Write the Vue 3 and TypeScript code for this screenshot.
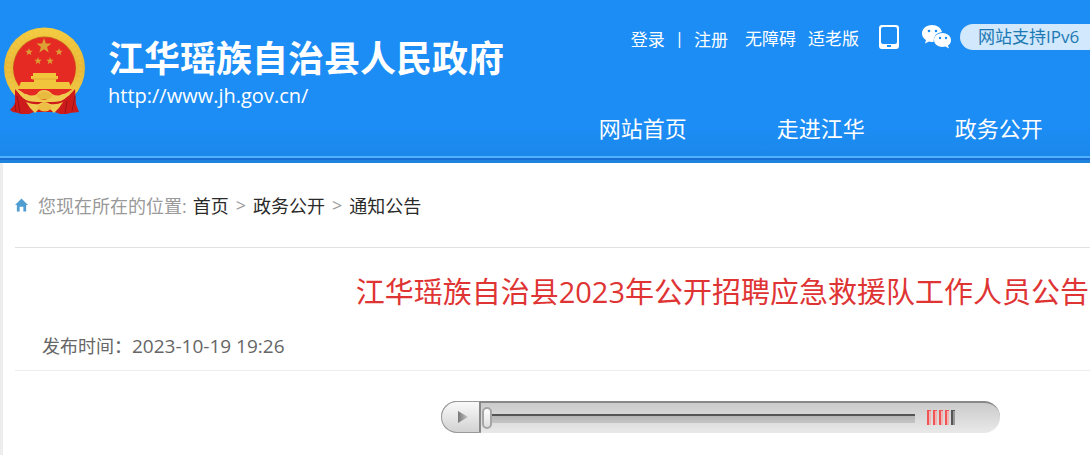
<script setup lang="ts">
const navItems: string[] = ['网站首页', '走进江华', '政务公开']
const crumbs: string[] = ['首页', '政务公开', '通知公告']
const volumeBars: number[] = [0, 1, 2, 3, 4]
const star = (cx: number, cy: number, r: number): string =>
  Array.from({ length: 10 }, (_, i) => {
    const radius = i % 2 ? r * 0.4 : r
    const a = (i * Math.PI) / 5 - Math.PI / 2
    return `${(cx + radius * Math.cos(a)).toFixed(2)},${(cy + radius * Math.sin(a)).toFixed(2)}`
  }).join(' ')
const stars: string[] = [
  star(40, 19, 8),
  star(25, 25, 4),
  star(55, 25, 4),
  star(34, 34, 4),
  star(46, 34, 4),
]
</script>

<template>
  <div class="page">
    <header class="header">
      <div class="brand">
        <svg class="emblem" viewBox="0 0 82 88" aria-hidden="true">
          <defs>
            <linearGradient id="gold" x1="0" y1="0" x2="0" y2="1">
              <stop offset="0" stop-color="#f3cb40" />
              <stop offset="0.5" stop-color="#e8b838" />
              <stop offset="1" stop-color="#f3cf48" />
            </linearGradient>
          </defs>
          <circle cx="40.500" cy="41" r="40.500" fill="url(#gold)" />
          <circle cx="40.500" cy="41" r="36" fill="none" stroke="#f9dc66" stroke-width="4" stroke-dasharray="2 3" opacity="0.2" />
          <circle cx="40.500" cy="41" r="31.500" fill="#c8641f" />
          <circle cx="40.500" cy="41.500" r="31" fill="#e42a22" />
          <polygon v-for="(s, i) in stars" :key="i" :points="s" fill="#dca035" />
          <path d="M29 46h23v3h2v3h-2v3H30v-3h-3v-3h2z" fill="#f2c63c" />
          <path d="M28 52h25" stroke="#e5a834" />
          <path d="M17 55h48l3 7H14z" fill="#f2c63c" />
          <path d="M14 62h54q-1 3-3 5H17q-2-2-3-5z" fill="#e42a22" />
          <path d="M11 62q10 13 22 13h15q13 0 23-13l1 15 3 8-9 1-3 1H56l-5-2H30l-5 2H17l-3-1-5-1-3-2 5-6z" fill="#cd1b1b" />
          <path d="M13 62q4 2 8 5 7 3 12 0 2-4 7-4t8 4q6 3 12 0 5-2 8-5-3 8-11 12-9 2-13-1-5-3-9 0-6 3-13 0-7-4-9-11z" fill="#f0cb52" />
          <path d="M32 69q8-9 17 0l-4 3h-9z" fill="#e9ba40" />
          <path d="M22 75q8 3 13 2 5-4 11 0 7 1 13-2-4 7-9 11l-4-4q-5 4-11 0l-4 4q-5-4-9-11z" fill="#f0cb52" />
          <path d="M33 81q7-10 15 0-7 7-15 0z" fill="#ecbe44" />
          <path d="M13 69l3 17m-5-10l1 9m59-16l-3 15m-5-10l-2 12" stroke="#9a1218" fill="none" />
        </svg>
        <div class="brand-text">
          <h1>江华瑶族自治县人民政府</h1>
          <p>http://www.jh.gov.cn/</p>
        </div>
      </div>
      <div class="header-side">
        <div class="tools">
          <span class="account"><a href="#">登录</a><span>|</span><a href="#">注册</a></span>
          <span class="access"><a href="#">无障碍</a><a href="#">适老版</a></span>
          <a class="phone" href="#" aria-label="手机版">
            <svg viewBox="0 0 20 25">
              <path fill-rule="evenodd" fill="#fff" d="M3 0h14q3 0 3 3v18q0 3-3 3H3q-3 0-3-3V3q0-3 3-3zM4 2Q2 2 2 4v13q0 2 2 2h12q2 0 2-2V4q0-2-2-2zM8 20v2h4v-2z" />
            </svg>
          </a>
          <a class="wechat" href="#" aria-label="微信">
            <svg viewBox="0 0 30 24">
              <path d="M10 0C4 0 0 4 0 8.500c0 3 1.500 5 4 6.500l-1 3.500 4-2q3 .8 4.500 .5 0-9 8.500-10C19 3 15.500 0 10 0z" fill="#fff" />
              <path d="M20.500 8C16 8 12 11 12 15s4 7 8.500 7l3-.5 3.500 2-1-3q3-2 3-5.500c0-4-4-7-8.500-7z" fill="#fff" />
              <g fill="#1c8df5"><circle cx="7" cy="6" r="1.300" /><circle cx="14" cy="6" r="1.300" /><circle cx="18" cy="13" r="1.200" /><circle cx="24" cy="13" r="1.200" /></g>
            </svg>
          </a>
          <a class="ipv6" href="#">网站支持IPv6</a>
        </div>
        <nav class="nav">
          <a v-for="item in navItems" :key="item" href="#">{{ item }}</a>
        </nav>
      </div>
    </header>
    <main class="content">
      <nav class="crumbs">
        <svg viewBox="0 0 14 14" aria-hidden="true">
          <path d="M7 0l7 7h-2v7H9V9H5v5H2V7H0z" fill="#509dd2" />
        </svg>
        <span>您现在所在的位置:</span>
        <template v-for="(crumb, i) in crumbs" :key="crumb">
          <span v-if="i > 0" class="sep">&gt;</span>
          <a href="#">{{ crumb }}</a>
        </template>
      </nav>
      <article>
        <h2>江华瑶族自治县2023年公开招聘应急救援队工作人员公告</h2>
        <p class="date">发布时间：<time datetime="2023-10-19T19:26">2023-10-19 19:26</time></p>
        <div class="player">
          <button class="play" type="button" aria-label="播放">
            <svg viewBox="0 0 10 12">
              <defs>
                <linearGradient id="arrow"><stop offset="0" stop-color="#777" /><stop offset="1" stop-color="#c4c4c4" /></linearGradient>
              </defs>
              <path d="M0 0l10 6-10 6z" fill="url(#arrow)" />
            </svg>
          </button>
          <input class="seek" type="range" min="0" max="100" value="0" aria-label="播放进度" />
          <button class="volume" type="button" aria-label="音量">
            <span v-for="b in volumeBars" :key="b"></span>
          </button>
        </div>
      </article>
    </main>
  </div>
</template>

<style>
body {
  margin: 0;
  background: #fff;
}
</style>

<style scoped>
.page {
  min-height: 100vh;
  overflow: hidden;
  display: flex;
  flex-direction: column;
  font-family: "Open Sans", "Noto Sans CJK SC", sans-serif;
}
a {
  color: inherit;
  text-decoration: none;
}
h1, h2, p {
  margin: 0;
}
svg {
  display: block;
}
.header {
  display: flex;
  justify-content: space-between;
  color: #fff;
  background: linear-gradient(#1c8df5 80%, #1b88ea);
  border-bottom: 5px solid #1e84de;
  box-shadow: inset 0 -2px #4eb0fe;
  position: relative;
}
.header::after {
  content: "";
  position: absolute;
  left: 0;
  right: 0;
  bottom: -2px;
  height: 2px;
  background: #176fd3;
}
.brand {
  display: flex;
  gap: 22px;
  padding: 27px 0 0 4px;
}
.emblem {
  width: 82px;
  height: 88px;
}
.brand-text {
  padding-top: 8px;
  white-space: nowrap;
}
.brand h1 {
  font-size: 36px;
  line-height: 48px;
  font-weight: 700;
}
.brand p {
  font-size: 20px;
  line-height: 26px;
}
.header-side {
  display: flex;
  flex-direction: column;
  gap: 58px;
  padding-top: 20px;
  height: 138px;
}
.tools {
  display: flex;
  align-items: center;
  margin-left: 32px;
  height: 34px;
  font-size: 17px;
  white-space: nowrap;
}
.account {
  display: flex;
  gap: 10px;
  margin-right: 17px;
  padding-top: 3px;
}
.access {
  display: flex;
  gap: 12px;
  margin-right: 20px;
}
.phone {
  width: 20px;
  margin-right: 23px;
}
.wechat {
  width: 30px;
  margin-right: 8px;
}
.ipv6 {
  box-sizing: border-box;
  width: 130px;
  padding-left: 18px;
  line-height: 26px;
  border-radius: 14px 0 0 14px;
  background: #d1e8fd;
  color: #1d79b4;
}
.nav {
  display: flex;
  gap: 90px;
  padding-right: 44px;
  font-size: 22px;
  line-height: 32px;
  white-space: nowrap;
}
.content {
  flex: 1;
  border-left: 3px solid #ededed;
  padding-left: 12px;
}
.crumbs {
  display: flex;
  align-items: center;
  height: 84px;
  border-bottom: 1px solid #e1e1e1;
  font-size: 18px;
  color: #999;
}
.crumbs svg {
  width: 13px;
  height: 14px;
  margin-right: 10px;
}
.crumbs a {
  color: #2a2a2a;
}
.crumbs span + a {
  margin-left: 6px;
}
.crumbs .sep {
  margin: 0 1px 0 7px;
}
h2 {
  padding: 23px 1px 1px 0;
  font-size: 29px;
  line-height: 42px;
  font-weight: 400;
  color: #df3434;
  text-align: right;
  white-space: nowrap;
}
.date {
  padding: 16px 27px 7px;
  border-bottom: 1px solid #ededed;
  font-size: 18px;
  line-height: 33px;
  color: #666;
}
.date time {
  font-size: 19px;
  line-height: 1;
}
.player {
  display: flex;
  align-items: center;
  box-sizing: border-box;
  width: 52%;
  height: 32px;
  margin: 30px 90px 0 auto;
  border-top: 2px solid #888;
  border-radius: 16px;
  background: linear-gradient(#cbcbcb, #e9e9e9);
}
.play {
  box-sizing: border-box;
  flex: none;
  width: 40px;
  height: 32px;
  margin-top: -2px;
  padding: 0 0 0 16px;
  border: 1px solid #999;
  border-right: 2px solid #888;
  border-radius: 16px 0 0 16px;
  background: linear-gradient(#f9f9f9, #d2d2d2);
}
.play svg {
  width: 10px;
  height: 12px;
}
.seek {
  appearance: none;
  flex: 1;
  min-width: 0;
  height: 24px;
  margin: 0 0 0 1px;
  background: linear-gradient(#0000 8px, #555 8px, #555 10px, #b5b5b5 10px, #c5c5c5 17px, #0000 17px);
}
.seek::-webkit-slider-thumb {
  appearance: none;
  box-sizing: border-box;
  width: 10px;
  height: 22px;
  border: 2px solid #a5a5a5;
  border-radius: 5px;
  background: linear-gradient(#fff, #ddd);
}
.volume {
  display: flex;
  flex: none;
  gap: 2px;
  margin: 0 45px 0 12px;
  padding: 0 0 2px;
  border: 0;
  background: none;
}
.volume span {
  box-sizing: border-box;
  width: 4px;
  height: 15px;
  border: solid #ef5555;
  border-width: 1px 0 0 2px;
  background: #f4b3b3;
}
.volume span:last-child {
  border-color: #555;
  background: #999;
}
</style>
